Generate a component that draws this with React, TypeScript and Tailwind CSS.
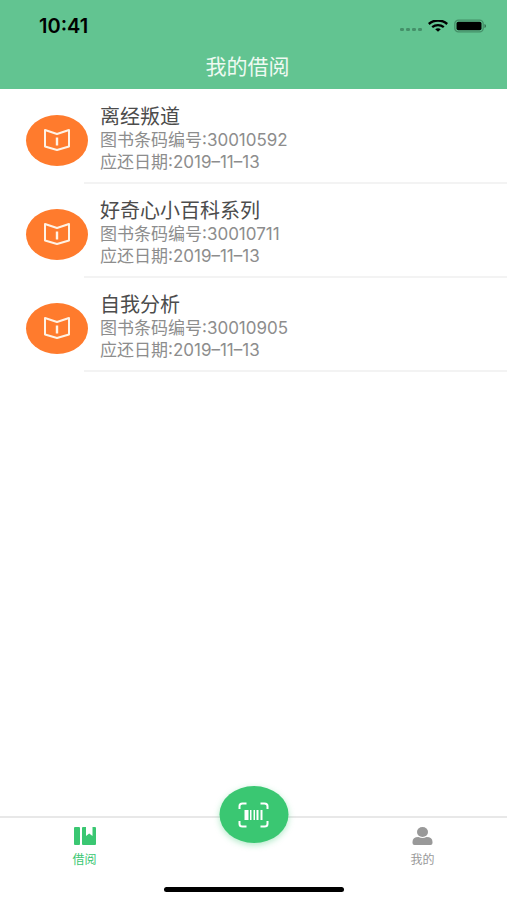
import React from "react";

const books = [
  { title: "离经叛道", code: "30010592", due: "2019–11–13" },
  { title: "好奇心小百科系列", code: "30010711", due: "2019–11–13" },
  { title: "自我分析", code: "30010905", due: "2019–11–13" },
];

function StatusBar() {
  return (
    <div className="flex h-11 items-center justify-between pt-2 pr-[21px] pl-[39px] text-black">
      <time className="text-xl leading-5 font-semibold">10:41</time>
      <div className="flex items-center gap-1">
        <svg className="h-3 w-6" viewBox="0 0 24 12" fill="#459069" aria-hidden="true">
          <rect x="0" y="8" width="4" height="3" rx="1.2" />
          <rect x="6" y="8" width="4" height="3" rx="1.2" />
          <rect x="12" y="8" width="4" height="3" rx="1.2" />
          <rect x="18" y="8" width="4" height="3" rx="1.2" />
        </svg>
        <svg className="h-3 w-5" viewBox="0 0 20 12" fill="none" stroke="currentColor" aria-hidden="true">
          <path d="M.8 4C6-.6 14-.6 19.2 4" strokeWidth="2.5" />
          <path d="M4.2 7.2c3.4-2.9 8.2-2.9 11.6 0" strokeWidth="2.3" />
          <path d="M7.2 9.2c1.7-1.3 3.9-1.3 5.6 0L10 11.8Z" fill="currentColor" stroke="none" />
        </svg>
        <svg className="ml-0.5 h-3.5 w-8" viewBox="0 0 32 14" aria-hidden="true">
          <rect x=".8" y="1.2" width="28.4" height="11.6" rx="3.6" fill="none" stroke="#459069" strokeWidth="1.3" />
          <rect x="2.5" y="2.8" width="25" height="8.4" rx="1.8" fill="#000" />
          <path d="M30.5 5v4q1.5-.6 1.5-2t-1.5-2Z" fill="#306b4c" />
        </svg>
      </div>
    </div>
  );
}

function BookIcon() {
  return (
    <svg
      className="h-6 w-7"
      viewBox="0 0 28 24"
      fill="none"
      stroke="#fff2e5"
      strokeWidth="2"
      strokeLinejoin="round"
      aria-hidden="true"
    >
      <path d="M2 2 14 6 26 2v16.5L14 22 2 18.5Z" />
      <path d="M14 9.5v8" strokeWidth="2.4" />
    </svg>
  );
}

function ScanIcon() {
  return (
    <svg className="h-7 w-8" viewBox="0 0 32 28" aria-hidden="true">
      <path
        d="M2 8V5q0-2.5 3-2.5h4M23 2.5h4q3 0 3 2.5v3M30 20v3q0 2.5-3 2.5h-4M9 25.5H5q-3 0-3-2.5v-3"
        fill="none"
        stroke="#fff"
        strokeWidth="2"
      />
      <path d="M7 9h4v10H7ZM12.5 9H14v10h-1.5ZM16 9h1.5v10H16ZM19 9h2v10h-2ZM23 9h2v10h-2Z" fill="#fff" />
    </svg>
  );
}

export default function App() {
  return (
    <div className="flex min-h-screen flex-col bg-white font-['Inter','Noto_Sans_CJK_SC',sans-serif]">
      <header className="bg-[#62c491]">
        <StatusBar />
        <h1 className="h-[45px] pr-3 text-center text-[21px] leading-[45px] text-[#effaf2]">我的借阅</h1>
      </header>

      <main className="flex-1">
        <ul className="pt-px">
          {books.map((book) => (
            <li key={book.code} className="flex">
              <div className="flex w-[84px] shrink-0 items-center pt-1.5 pl-[26px]">
                <span className="flex h-[51px] w-[62px] shrink-0 items-center justify-center rounded-[50%] bg-[#ff7b2d]">
                  <BookIcon />
                </span>
              </div>
              <div className="flex-1 border-b-2 border-[#f3f3f3] pt-[15px] pb-[9px] pl-4">
                <h2 className="text-xl leading-6 text-[#4c4c4c]">{book.title}</h2>
                <p className="text-[17px] leading-[22px] text-[#8d8d8d]">图书条码编号:{book.code}</p>
                <p className="text-[17px] leading-[22px] text-[#8d8d8d]">应还日期:{book.due}</p>
              </div>
            </li>
          ))}
        </ul>
      </main>

      <nav className="relative flex h-[84px] justify-between border-t-2 border-[#e8e8e8]">
        <button type="button" className="flex w-1/3 flex-col items-center gap-1.5 pt-2 text-[#3ac772]">
          <svg className="h-5 w-6" viewBox="0 0 24 20" fill="currentColor" aria-hidden="true">
            <rect x="1" y="1" width="6" height="18" rx="1" />
            <path d="M9 2q0-1 1-1h3v9l3.2-2.5L19.5 10V1H22q1 0 1 1v16q0 1-1 1H10q-1 0-1-1Z" />
          </svg>
          <span className="text-xs leading-4">借阅</span>
        </button>
        <button type="button" className="flex w-1/3 flex-col items-center gap-1.5 pt-2 text-[#999999]">
          <svg className="h-5 w-6" viewBox="0 0 24 20" fill="currentColor" aria-hidden="true">
            <ellipse cx="11.5" cy="6" rx="5.5" ry="5" />
            <path d="M1.5 16q0-5 6-5 4 2.2 8 0 6 0 6 5v1q0 2-2 2h-16q-2 0-2-2Z" />
          </svg>
          <span className="text-xs leading-4">我的</span>
        </button>
        <button
          type="button"
          aria-label="扫码"
          className="absolute -top-8 left-1/2 flex h-[57px] w-[69px] -translate-x-1/2 items-center justify-center rounded-[50%] bg-[#3ac772] shadow-[0_2px_6px_#3ac77266]"
        >
          <ScanIcon />
        </button>
        <div className="absolute bottom-2 left-1/2 h-[5px] w-[180px] -translate-x-1/2 rounded-full bg-black" />
      </nav>
    </div>
  );
}
